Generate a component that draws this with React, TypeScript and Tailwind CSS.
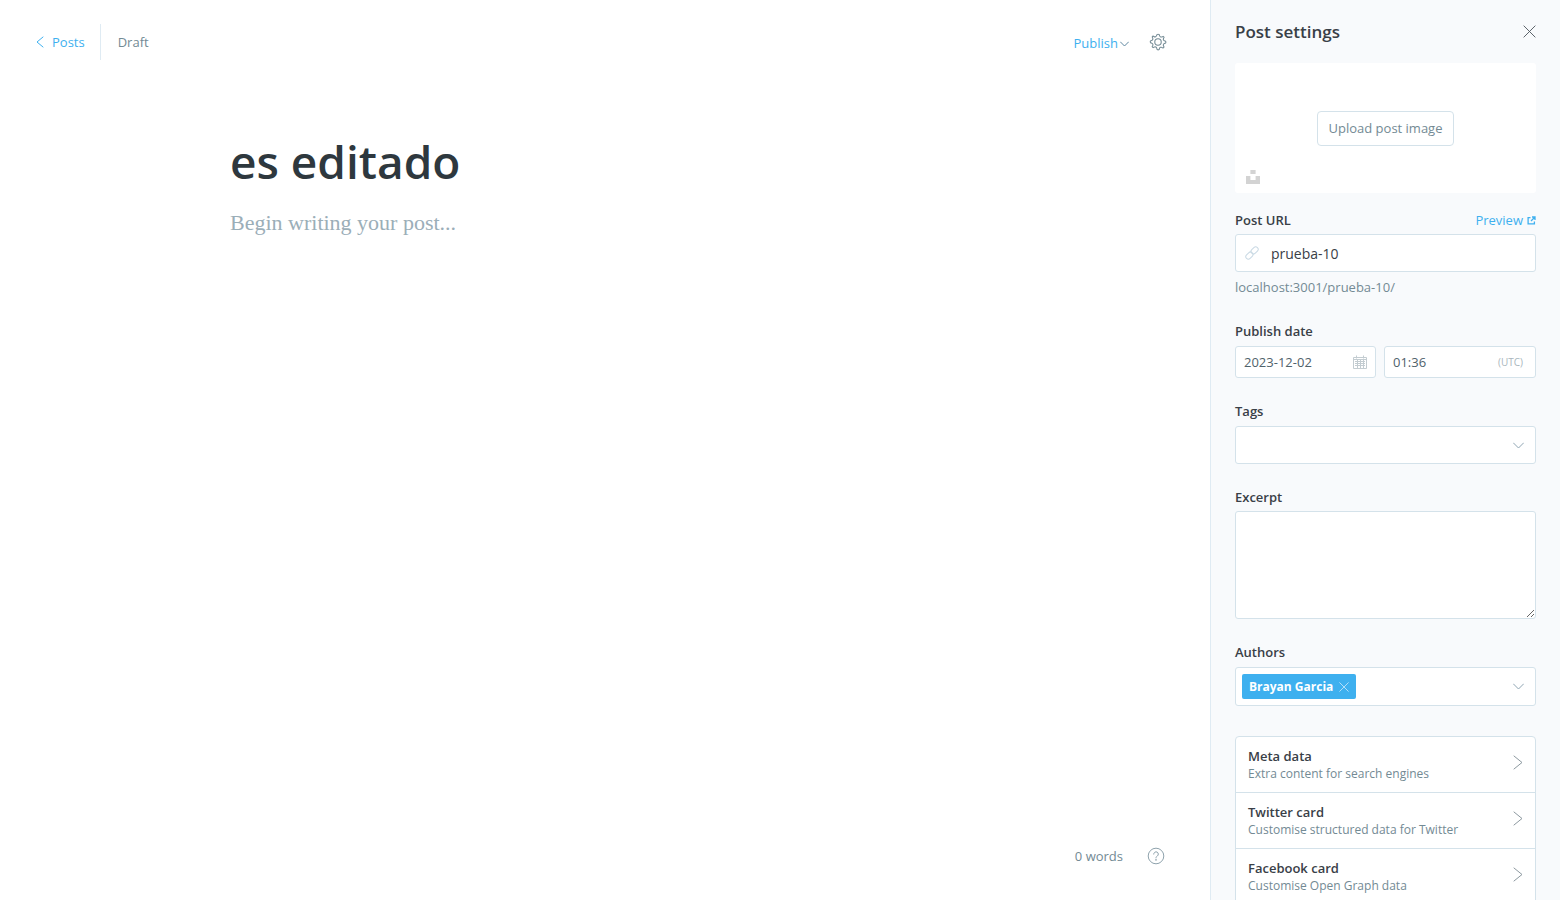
import { useState, type ReactNode } from "react";

const inputBox = "rounded-[3px] border border-[#d4e2ea] bg-white outline-none";

function Chevron({ className, points, box = "0 0 24 24" }: { className: string; points: string; box?: string }) {
  return (
    <svg className={className} viewBox={box} fill="none" stroke="currentColor" strokeWidth="1" aria-hidden="true">
      <polyline points={points} strokeLinecap="round" strokeLinejoin="round" />
    </svg>
  );
}

function Cross({ className }: { className: string }) {
  return (
    <svg className={className} viewBox="0 0 14 14" fill="none" stroke="currentColor" strokeWidth="1" aria-hidden="true">
      <path d="M1 1l12 12M13 1L1 13" strokeLinecap="round" />
    </svg>
  );
}

function Gear() {
  return (
    <svg className="size-[18px]" viewBox="0 0 24 24" fill="none" stroke="currentColor" strokeWidth="1.4" strokeLinejoin="round" aria-hidden="true">
      <circle cx="12" cy="12" r="4.3" />
      <path d="M13.7 2.3l.5 1.6a2.3 2.3 0 0 0 3.2 1.3l1.5-.7a2.5 2.5 0 0 1 1.200 1.200l-.8 1.5a2.3 2.3 0 0 0 1.3 3.2l1.6.5a2.6 2.6 0 0 1 0 2.5l-1.6.5a2.3 2.3 0 0 0-1.3 3.2l.7 1.5a2.5 2.5 0 0 1-1.3 1.3l-1.5-.7a2.3 2.3 0 0 0-3.2 1.3l-.5 1.6a2.6 2.6 0 0 1-2.6 0l-.5-1.6A2.3 2.3 0 0 0 7 18.800l-1.500.7a2.500 2.500 0 0 1-1.300-1.300l.8-1.500a2.300 2.300 0 0 0-1.300-3.200L2 13a2.600 2.600 0 0 1 0-2.500l1.600-.6a2.300 2.300 0 0 0 1.300-3.200l-.7-1.500a2.500 2.500 0 0 1 1.200-1.100l1.500.8a2.300 2.300 0 0 0 3.200-1.300l.5-1.500a2.600 2.600 0 0 1 3.100.2z" />
    </svg>
  );
}

function CalendarIcon() {
  return (
    <svg className="size-[14px] shrink-0 text-[#c3ccd1]" viewBox="0 0 14 14" fill="none" stroke="currentColor" strokeWidth="1" aria-hidden="true">
      <path d="M.5 2.500h13v11H.5zM.5 4.500h13M3.500 .5v3M10.500 .5v3M2 6.500h10M2 8.500h10M2 10.500h10M4.500 5v8M7.500 5v8M10.500 5v8" />
    </svg>
  );
}

function LinkIcon() {
  return (
    <svg className="size-[14px] shrink-0 text-[#c9d9e4]" viewBox="0 0 14 14" fill="none" stroke="currentColor" strokeWidth="1" aria-hidden="true">
      <rect x="-4" y="-2.500" width="8" height="5" rx="2.500" transform="translate(9.600 4.400) rotate(-45)" />
      <rect x="-4" y="-2.500" width="8" height="5" rx="2.500" transform="translate(4.400 9.600) rotate(-45)" />
    </svg>
  );
}

function Label({ htmlFor, children }: { htmlFor: string; children: ReactNode }) {
  return (
    <label htmlFor={htmlFor} className="block h-[18px] text-[13px] leading-[18px] font-semibold text-[#394047]">
      {children}
    </label>
  );
}

const cards = [
  { title: "Meta data", text: "Extra content for search engines" },
  { title: "Twitter card", text: "Customise structured data for Twitter" },
  { title: "Facebook card", text: "Customise Open Graph data" },
];

export default function App() {
  const [slug, setSlug] = useState("prueba-10");
  const [date, setDate] = useState("2023-12-02");
  const [time, setTime] = useState("01:36");

  return (
    <div className="flex h-screen overflow-hidden bg-white font-['Open_Sans',sans-serif] text-[13px] text-[#738a94]">
      <main className="flex min-w-0 flex-1 flex-col">
        <header className="flex items-center justify-between pt-6 pr-[43px] pl-9">
          <div className="flex h-9 items-center">
            <a href="#posts" className="flex h-9 items-center gap-2 pr-[15px] text-[#3eb0ef]">
              <Chevron className="h-3 w-2" box="0 0 8 12" points="7,1 1,6 7,11" />
              <span className="pt-0.5">Posts</span>
            </a>
            <span className="flex h-9 items-center border-l border-[#dfebf3] pt-0.5 pl-[17px]">Draft</span>
          </div>
          <div className="flex items-center gap-5">
            <button type="button" className="flex items-center gap-0.5 pt-[3px] text-[#3eb0ef]">
              Publish
              <Chevron className="mt-px h-[6px] w-[9px] text-[#5e87a0]" box="0 0 9 6" points="0.500,1 4.500,5 8.500,1" />
            </button>
            <button type="button" aria-label="Settings" className="text-[#738a94]">
              <Gear />
            </button>
          </div>
        </header>

        <section className="mx-auto flex w-full max-w-[750px] flex-1 flex-col pt-[69px]">
          <h1 className="text-[46px] leading-[64px] font-semibold text-[#2e383e]">es editado</h1>
          <textarea
            aria-label="Post content"
            placeholder="Begin writing your post..."
            className="mt-[14px] block w-full flex-1 resize-none font-['Liberation_Serif',serif] text-[22px] leading-8 outline-none placeholder:text-[#9baeb8]"
          />
        </section>

        <footer className="flex items-center justify-end gap-6 pr-[45px] pb-[34px]">
          <span>0 words</span>
          <button type="button" aria-label="Help" className="text-[#8fa3ad]">
            <svg className="size-[18px]" viewBox="0 0 18 18" fill="none" stroke="currentColor" strokeWidth="1" aria-hidden="true">
              <circle cx="9" cy="9" r="7.800" />
              <path d="M6.700 7.100a2.300 2.300 0 1 1 3.600 1.900c-.8.500-1.300.9-1.300 1.900" strokeLinecap="round" />
              <circle cx="9" cy="12.900" r=".4" fill="currentColor" />
            </svg>
          </button>
        </footer>
      </main>

      <aside className="w-[350px] shrink-0 overflow-hidden border-l border-[#dfebf3] bg-[#f8fafc] px-6">
        <header className="flex h-[63px] items-center justify-between">
          <h2 className="text-[17px] font-semibold text-[#394047]">Post settings</h2>
          <button type="button" aria-label="Close" className="text-[#50585f]">
            <Cross className="size-[13px]" />
          </button>
        </header>

        <div className="relative flex h-[130px] items-center justify-center rounded-[3px] bg-white">
          <button type="button" className="h-[35px] rounded-[4px] border border-[#d4e2ea] px-[11px] pt-0.5">
            Upload post image
          </button>
          <button type="button" aria-label="Choose from Unsplash" className="absolute bottom-[9px] left-[11px] text-[#d3d3d3]">
            <svg className="size-[14px]" viewBox="0 0 14 14" fill="currentColor" aria-hidden="true">
              <path d="M4.400 0h5.200v3.900H4.400zM0 6.100h4.400V10h5.200V6.100H14V14H0z" />
            </svg>
          </button>
        </div>

        <div className="mt-[18px] flex items-center justify-between">
          <Label htmlFor="slug">Post URL</Label>
          <a href="#preview" className="flex items-center gap-1 leading-[18px] text-[#3eb0ef]">
            Preview
            <svg className="size-[9px]" viewBox="0 0 9 9" fill="none" stroke="currentColor" strokeWidth="1.300" aria-hidden="true">
              <path d="M3.500 1.600H1.100v6.300h6.300V5.500M5 1h3v3M8 1L4 5" />
            </svg>
          </a>
        </div>
        <div className={`${inputBox} mt-[5px] flex h-[38px] items-center gap-3 px-[9px]`}>
          <LinkIcon />
          <input id="slug" value={slug} onChange={(e) => setSlug(e.target.value)} className="min-w-0 flex-1 text-[14px] text-[#394047] outline-none" />
        </div>
        <p className="mt-1 h-[22px] leading-[22px]">localhost:3001/prueba-10/</p>

        <div className="mt-6">
          <Label htmlFor="date">Publish date</Label>
          <div className="mt-1.5 flex gap-2">
            <div className={`${inputBox} flex h-8 w-[141px] items-center px-2`}>
              <input id="date" value={date} onChange={(e) => setDate(e.target.value)} className="min-w-0 flex-1 pt-0.5 text-[#50626b] outline-none" />
              <CalendarIcon />
            </div>
            <div className={`${inputBox} flex h-8 min-w-0 flex-1 items-center pr-3 pl-2`}>
              <input aria-label="Publish time" value={time} onChange={(e) => setTime(e.target.value)} className="min-w-0 flex-1 pt-0.5 text-[#50626b] outline-none" />
              <span className="text-[10px] text-[#a9b6bd]">(UTC)</span>
            </div>
          </div>
        </div>

        <div className="mt-6">
          <Label htmlFor="tags">Tags</Label>
          <div className={`${inputBox} mt-1.5 flex h-[38px] items-center pr-[11px] pl-2`}>
            <input id="tags" className="min-w-0 flex-1 outline-none" />
            <Chevron className="h-[7px] w-[11px] text-[#8fa5b3]" box="0 0 11 7" points="0.500,1 5.500,6 10.500,1" />
          </div>
        </div>

        <div className="mt-6">
          <Label htmlFor="excerpt">Excerpt</Label>
          <textarea id="excerpt" className={`${inputBox} mt-[5px] block h-[108px] w-full resize-y p-2`} />
        </div>

        <div className="mt-6">
          <Label htmlFor="authors">Authors</Label>
          <div className={`${inputBox} mt-1.5 flex h-[39px] items-center pr-[11px] pl-1.5`}>
            <span className="flex h-[25px] items-center gap-1.5 rounded-[2px] bg-[#3eb0ef] px-[7px] text-[12px] font-bold whitespace-nowrap text-white">
              Brayan Garcia
              <button type="button" aria-label="Remove Brayan Garcia">
                <Cross className="size-[10px] text-[#e2f3fd]" />
              </button>
            </span>
            <input id="authors" className="min-w-0 flex-1 outline-none" />
            <Chevron className="h-[7px] w-[11px] text-[#8fa5b3]" box="0 0 11 7" points="0.500,1 5.500,6 10.500,1" />
          </div>
        </div>

        <ul className="mt-[30px] rounded-[4px] border border-[#d4e2ea] bg-white">
          {cards.map((card) => (
            <li key={card.title} className="border-b border-[#d4e2ea] last:border-b-0">
              <button type="button" className="flex h-[55px] w-full items-center justify-between px-3 text-left">
                <span className="pb-px">
                  <span className="block text-[13px] leading-[18px] font-semibold text-[#394047]">{card.title}</span>
                  <span className="block text-[12px] leading-[17px]">{card.text}</span>
                </span>
                <Chevron className="mb-1 h-[15px] w-[10px] text-[#8c989f]" box="0 0 10 15" points="1,1 9,7.500 1,14" />
              </button>
            </li>
          ))}
        </ul>
      </aside>
    </div>
  );
}
